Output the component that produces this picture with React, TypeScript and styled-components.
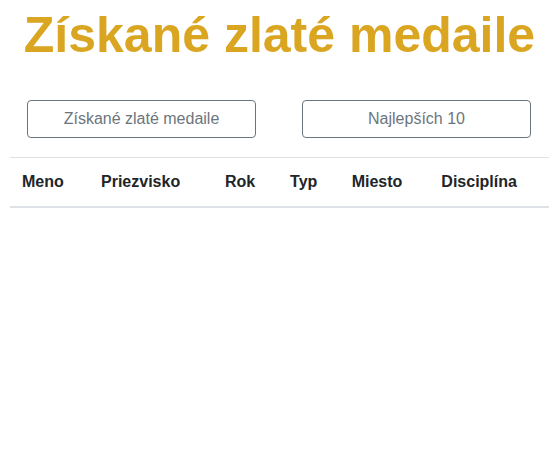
import React from "react";
import styled, { createGlobalStyle } from "styled-components";

const GlobalStyle = createGlobalStyle`
  html, body {
    margin: 0;
    padding: 0;
    background: #ffffff;
    font-family: "Liberation Sans", Arial, sans-serif;
    color: #212529;
  }
  * { box-sizing: border-box; }
`;

const Page = styled.div`
  padding: 5px 10px 0;
`;

const Title = styled.h1`
  margin: 0;
  font-size: 50px;
  line-height: 1.2;
  font-weight: 700;
  text-align: center;
  color: #daa520;
`;

const ButtonRow = styled.div`
  display: flex;
  justify-content: space-between;
  margin-top: 35px;
  padding: 0 18px 0 17px;
`;

const OutlineButton = styled.button`
  width: 229px;
  height: 38px;
  padding: 6px 12px;
  border: 1px solid #6c757d;
  border-radius: 4px;
  background: transparent;
  color: #6c757d;
  font-family: "Liberation Sans", Arial, sans-serif;
  font-size: 16px;
  line-height: 24px;
  text-align: center;
  cursor: pointer;
`;

const Table = styled.table`
  width: 100%;
  margin-top: 19px;
  border-collapse: collapse;
  color: #212529;
`;

const HeadCell = styled.th`
  padding: 12px;
  border-top: 1px solid #dee2e6;
  border-bottom: 2px solid #dee2e6;
  text-align: left;
  vertical-align: bottom;
  font-size: 16px;
  line-height: 24px;
  font-weight: 700;
`;

const columns = ["Meno", "Priezvisko", "Rok", "Typ", "Miesto", "Disciplína"];

export default function App() {
  return (
    <>
      <GlobalStyle />
      <Page>
        <Title>Získané zlaté medaile</Title>
        <ButtonRow>
          <OutlineButton>Získané zlaté medaile</OutlineButton>
          <OutlineButton>Najlepších 10</OutlineButton>
        </ButtonRow>
        <Table>
          <thead>
            <tr>
              {columns.map((c) => (
                <HeadCell key={c}>{c}</HeadCell>
              ))}
            </tr>
          </thead>
          <tbody />
        </Table>
      </Page>
    </>
  );
}
